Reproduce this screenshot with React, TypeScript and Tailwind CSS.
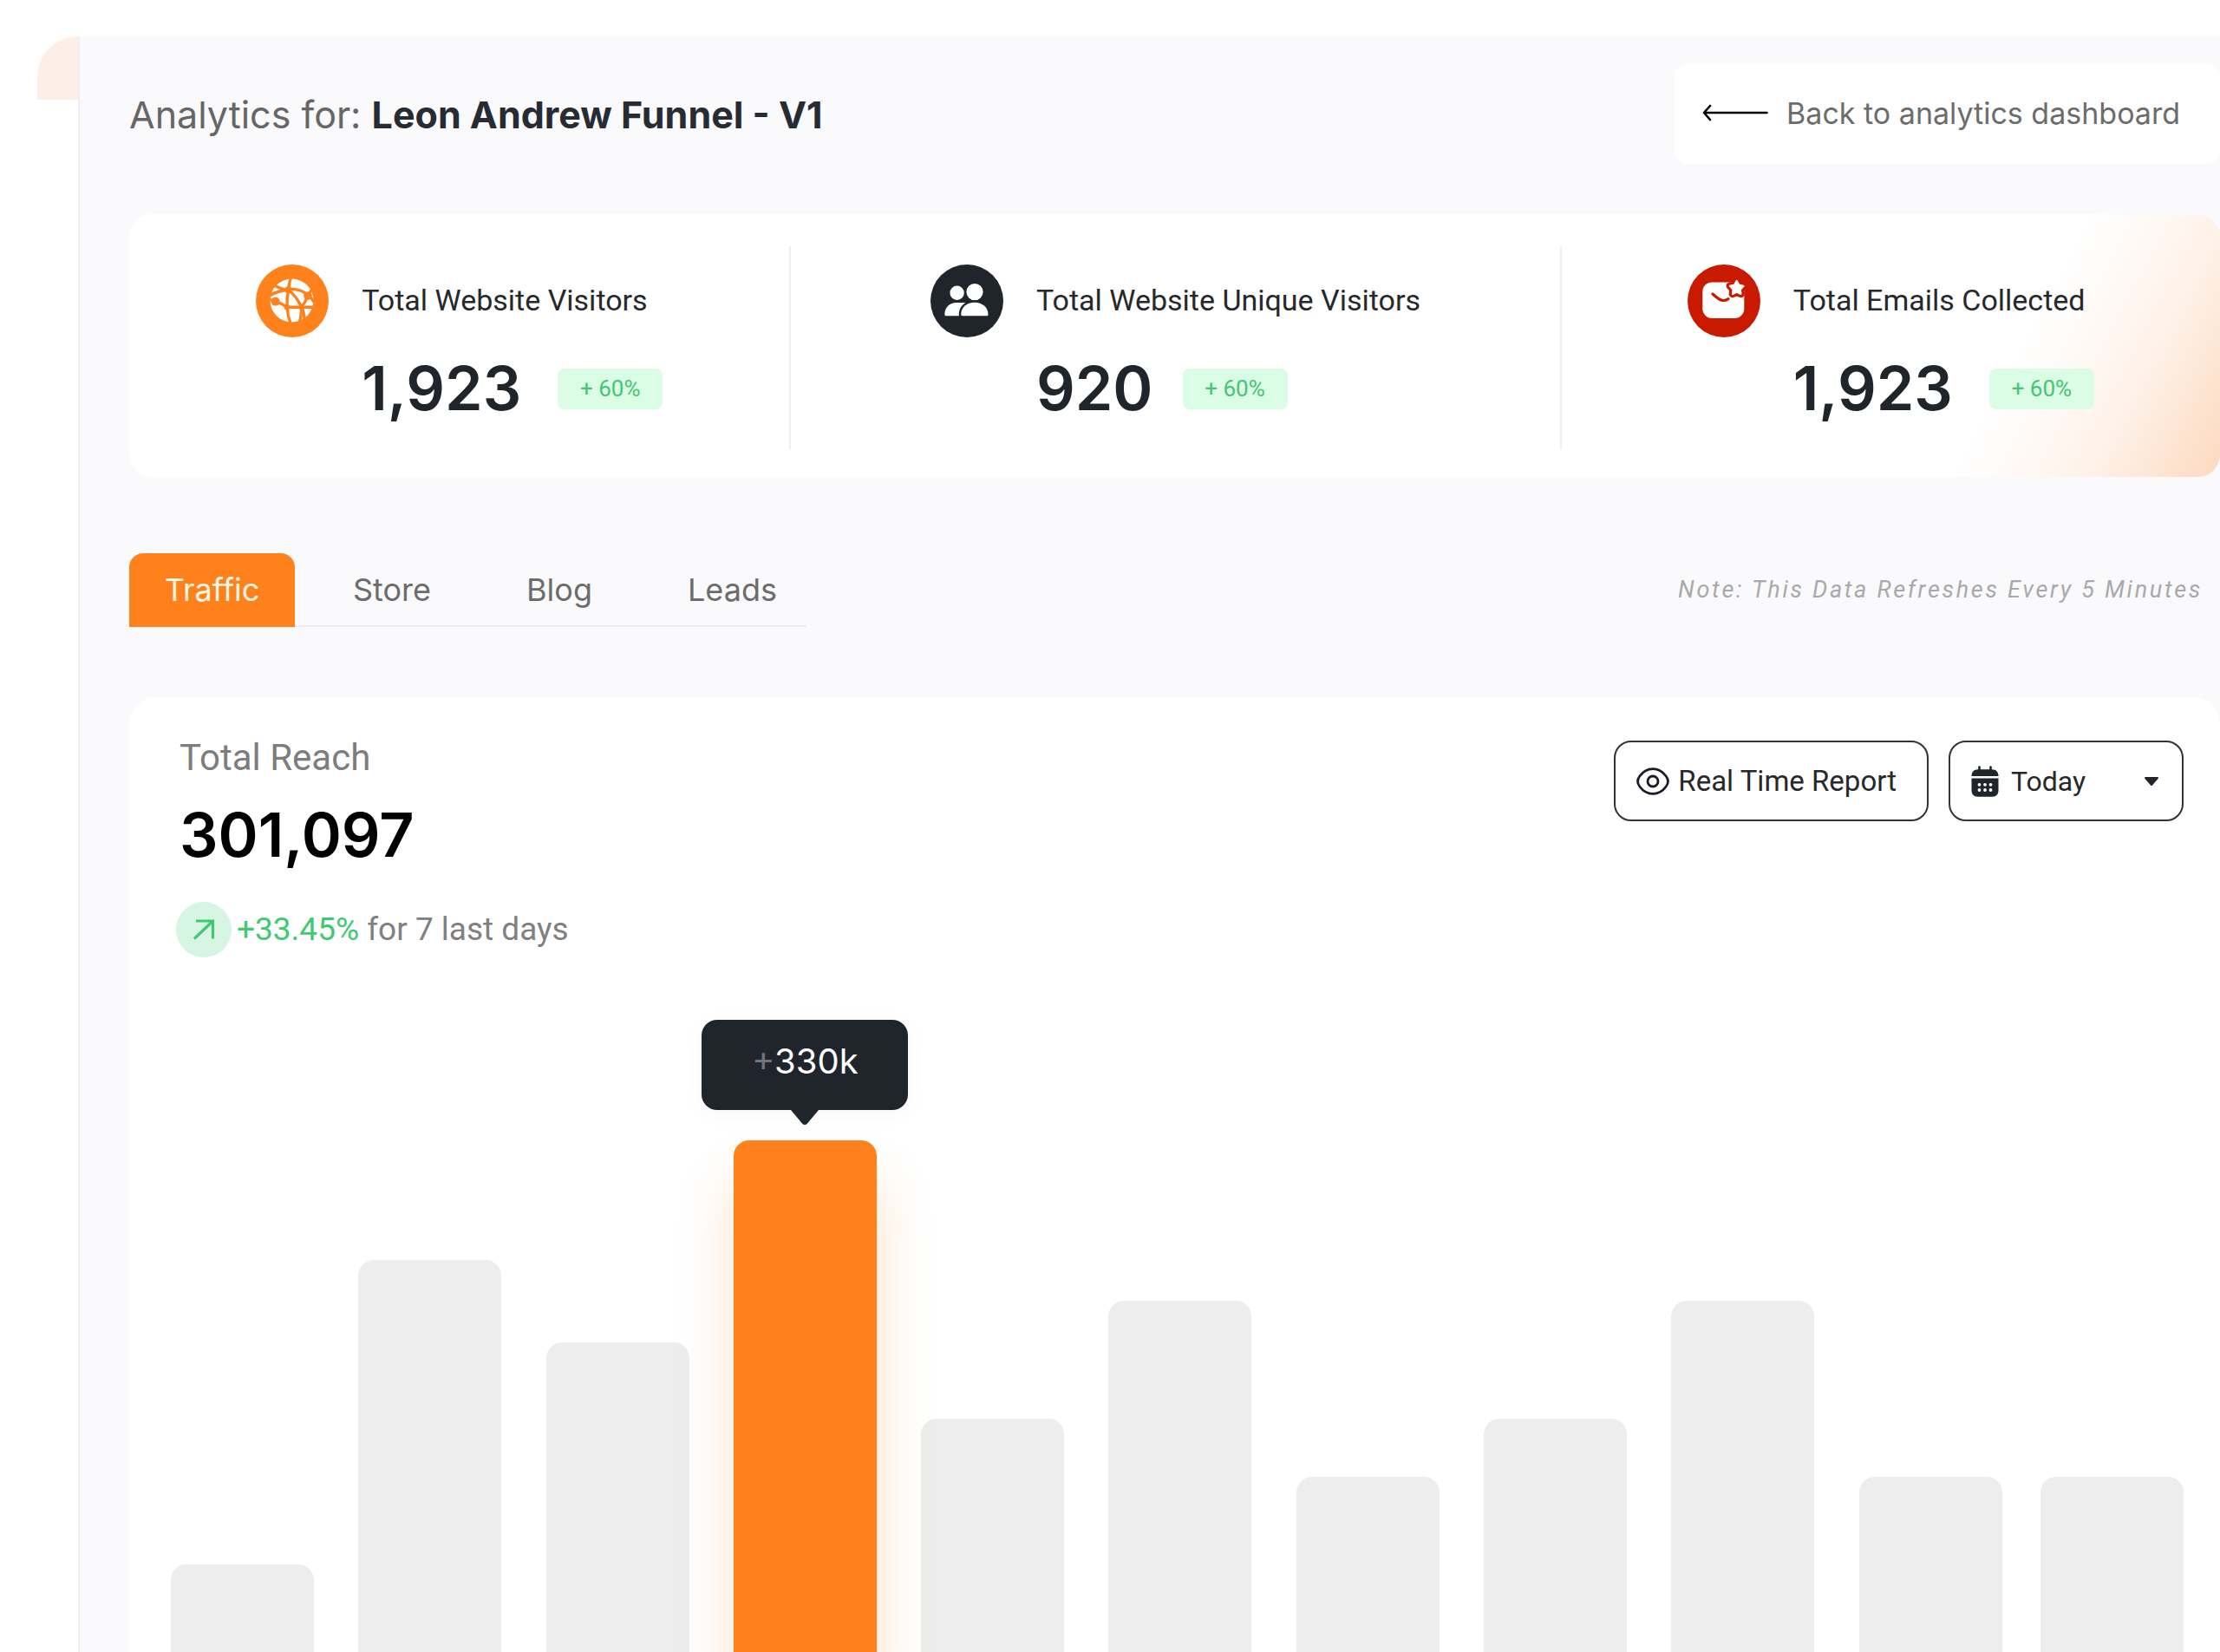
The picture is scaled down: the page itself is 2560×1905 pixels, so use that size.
import React from "react";

const stats = [
  { label: "Total Website Visitors", value: "1,923", change: "+ 60%", Icon: GlobeIcon, gap: "gap-[42px]" },
  { label: "Total Website Unique Visitors", value: "920", change: "+ 60%", Icon: UsersIcon, gap: "gap-[34px]" },
  { label: "Total Emails Collected", value: "1,923", change: "+ 60%", Icon: MailIcon, gap: "gap-[42px]" },
];

const tabs = ["Store", "Blog", "Leads"];

const bars = [101, 452, 357, 590, 269, 405, 202, 269, 405, 202, 202];
const activeBar = 3;

function GlobeIcon() {
  return (
    <svg viewBox="0 0 84 84" className="size-[84px]" aria-hidden="true">
      <circle cx="42" cy="42" r="42" fill="#fe811b" />
      <circle cx="41.5" cy="41.5" r="25" fill="#fff" />
      <g stroke="#fe811b" strokeWidth="3.4" fill="none" strokeLinecap="round">
        <path d="M37.7 29.3Q38 22 40.5 15" />
        <path d="M37.7 29.3Q30 29 20 23.5" />
        <path d="M37.7 29.3Q26 30 15.5 36" />
        <path d="M37.7 28.5Q52 27.5 61 36" />
        <path d="M37.7 29.3Q47 37 52.7 49.3" />
        <path d="M37.7 29.3Q35.5 39 36 49.3" />
        <path d="M22.7 42.7L15 40" />
        <path d="M22.7 42.7Q30 45 36 49.3H68" />
        <path d="M36 49.3Q37 60 40 68" />
        <path d="M52.7 49.3Q52.5 60 50 68" />
        <path d="M52.7 49.3Q56.5 57 56 66" />
        <path d="M52.7 49.3Q57 44 60 36L64.5 29" />
        <path d="M60 36Q65 39 67.5 44" />
      </g>
      <g fill="#fe811b">
        <circle cx="37.5" cy="29.3" r="4" />
        <circle cx="22.7" cy="42.7" r="5" />
        <circle cx="36" cy="49.3" r="3.2" />
        <circle cx="52.7" cy="49.3" r="3.4" />
        <circle cx="60" cy="36" r="4.8" />
      </g>
    </svg>
  );
}

function UsersIcon() {
  return (
    <svg viewBox="0 0 84 84" className="size-[84px]" aria-hidden="true">
      <circle cx="42" cy="42" r="42" fill="#1f252b" />
      <g fill="#fff">
        <circle cx="30.6" cy="32.8" r="8.2" />
        <path d="M16.3 57.5C16.3 49.5 22 44 30 44H42V59.3H18C17 59.3 16.3 58.6 16.3 57.5Z" />
        <g stroke="#1f252b" strokeWidth="5" paintOrder="stroke">
          <circle cx="51" cy="31.6" r="9.6" />
          <path d="M35.2 57.5C35.2 49.5 42 43.8 50.8 43.8S66.5 49.5 66.5 57.5C66.5 58.6 65.8 59.3 64.8 59.3H37C36 59.3 35.2 58.6 35.2 57.5Z" />
        </g>
      </g>
    </svg>
  );
}

function MailIcon() {
  const star = "M56.7 18.8L59.3 23.6L64.6 24.7L60.9 28.7L61.5 34L56.7 31.8L51.9 34L52.5 28.7L48.8 24.7L54.1 23.6Z";
  return (
    <svg viewBox="0 0 84 84" className="size-[84px]" aria-hidden="true">
      <circle cx="42" cy="42" r="42" fill="#c91a00" />
      <rect x="17.3" y="20.4" width="48" height="41.6" rx="11" fill="#fff" />
      <path d="M29 34Q36 40.5 40 41.4Q43.5 42 47 39.6" fill="none" stroke="#c91a00" strokeWidth="3.2" strokeLinecap="round" />
      <path d={star} fill="#c91a00" stroke="#c91a00" strokeWidth="8.5" strokeLinejoin="round" />
      <path d={star} fill="#fff" stroke="#fff" strokeWidth="2" strokeLinejoin="round" />
    </svg>
  );
}

function EyeIcon() {
  return (
    <svg viewBox="0 0 38 32" className="h-8 w-[38px]" fill="none" stroke="#1b1b2b" strokeWidth="2.8" aria-hidden="true">
      <path d="M19 1.6C12 1.600 8 4.300 3.800 10C0.800 14 0.800 18 3.800 22C8 27.700 12 30.400 19 30.400S30 27.700 34.200 22C37.200 18 37.200 14 34.200 10C30 4.300 26 1.600 19 1.600Z" />
      <circle cx="19" cy="16" r="6" />
    </svg>
  );
}

function CalendarIcon() {
  return (
    <svg viewBox="0 0 32 36" className="h-9 w-8" aria-hidden="true">
      <path d="M9.5 1.5V6M22.5 1.5V6" stroke="#1f252b" strokeWidth="2.6" strokeLinecap="round" />
      <path d="M0.5 12C0.5 7 3.5 4.3 8 4.3H24C28.5 4.3 31.5 7 31.5 12Z" fill="#1f252b" />
      <path d="M0.5 14.6H31.5V28.5C31.5 33 28.8 35.7 24.5 35.7H7.5C3.2 35.7 0.5 33 0.5 28.5Z" fill="#1f252b" />
      <g fill="#fff">
        {[9.5, 16, 22.5].map((x) => (
          <g key={x}>
            <circle cx={x} cy="21.8" r="1.9" />
            <circle cx={x} cy="28" r="1.9" />
          </g>
        ))}
      </g>
    </svg>
  );
}

export default function App() {
  return (
    <div className="flex min-h-screen overflow-hidden bg-white pt-[42px] pl-[43px] font-[Roboto,sans-serif]">
      <div className="h-[73px] w-[47px] shrink-0 rounded-tl-[60px] bg-[#feefe6]" />
      <main className="flex min-w-0 flex-1 flex-col border-l-2 border-[#eeeff1] bg-[#fafafc] pl-[57px]">
        <header className="flex items-center justify-between pt-8">
          <h1 className="font-[Inter,sans-serif] text-[43px] leading-[56px] text-[#666666]">
            Analytics for: <strong className="font-bold text-[#272b33]">Leon Andrew Funnel - V1</strong>
          </h1>
          <a
            href="#dashboard"
            className="flex h-[115px] items-center gap-[21px] rounded-[14px] bg-white pr-[46px] pb-[3px] pl-8 font-[Inter,sans-serif] text-[34px] text-[#6c6c6c]"
          >
            <svg viewBox="0 0 76 20" className="h-5 w-[76px]" fill="none" stroke="#000" strokeWidth="2.6" strokeLinecap="round" strokeLinejoin="round" aria-hidden="true">
              <path d="M74.5 10H2M9 2L2 10L9 18" />
            </svg>
            Back to analytics dashboard
          </a>
        </header>

        <section className="mt-[58px] grid grid-cols-[6fr_7fr_6fr] rounded-[26px] bg-[linear-gradient(118deg,#ffffff_88%,#fef2e9_94%,#fdd9be_100%)] pt-[37px] pb-[32px]">
          {stats.map(({ label, value, change, Icon, gap }, i) => (
            <div key={label} className={i ? "flex justify-center border-l-2 border-[#efeff1]" : "flex justify-center"}>
              <div className="flex gap-[38px] pt-[21px] pb-[28px]">
                <Icon />
                <div>
                  <h2 className="text-[34px] leading-[82px] text-[#27282b]">{label}</h2>
                  <div className={`flex items-center ${gap} mt-[19px]`}>
                    <span className="font-[Inter,sans-serif] text-[70px] leading-[84px] font-semibold text-[#1f252b]">{value}</span>
                    <span className="w-[121px] rounded-lg bg-[#dbfde5] text-center text-[26px] leading-[47px] text-[#43c673]">
                      {change}
                    </span>
                  </div>
                </div>
              </div>
            </div>
          ))}
        </section>

        <div className="mt-[88px] flex items-center justify-between pr-[20px]">
          <nav className="flex items-center border-b-2 border-[#ededf0] pr-[34px] font-[Inter,sans-serif] text-[36px] leading-[85px] text-[#6c6c6c]">
            <button type="button" className="-mb-[2px] w-[191px] rounded-t-2xl bg-[#fe811b] text-[#fff6e6]">
              Traffic
            </button>
            <div className="flex gap-[110px] pl-[67px]">
              {tabs.map((tab) => (
                <button type="button" key={tab} className="-mb-[2px]">
                  {tab}
                </button>
              ))}
            </div>
          </nav>
          <p className="text-[27px] tracking-widest text-[#a9a9ab] italic">Note: This Data Refreshes Every 5 Minutes</p>
        </div>

        <section className="mt-[81px] flex flex-1 flex-col rounded-t-[30px] bg-white pt-[46px] pr-[42px] pl-[48px]">
          <div className="flex items-start justify-between">
            <div className="pl-1.5">
              <h2 className="pl-1 text-[42px] leading-[48px] text-[#7d7d7d]">Total Reach</h2>
              <p className="mt-[25px] pl-1 font-[Inter,sans-serif] text-[70px] leading-[80px] font-semibold text-black">301,097</p>
              <div className="mt-[37px] flex items-center gap-[6px] text-[37px] leading-[64px] text-[#808080]">
                <span className="flex size-16 items-center justify-center rounded-full bg-[#d6f5e2]">
                  <svg viewBox="0 0 26 24" className="h-6 w-[26px]" fill="none" stroke="#41c972" strokeWidth="3.2" aria-hidden="true">
                    <path d="M2 22.5L23 2.5M4 2H23.5V22.5" />
                  </svg>
                </span>
                <p>
                  <span className="text-[#41c972]">+33.45%</span> for 7 last days
                </p>
              </div>
            </div>
            <div className="mt-1 flex gap-[23px] text-[#27282b]">
              <button type="button" className="flex h-[93px] items-center gap-2.5 rounded-[20px] border-2 border-[#333333] pr-[35px] pl-[24px] text-[33px]">
                <EyeIcon />
                Real Time Report
              </button>
              <div className="relative">
                <select
                  aria-label="Date range"
                  className="h-[93px] w-[271px] appearance-none rounded-[20px] border-2 border-[#333333] bg-white pl-[70px] text-[32px]"
                >
                  <option>Today</option>
                  <option>Last 7 days</option>
                </select>
                <span className="pointer-events-none absolute inset-y-0 left-[26px] flex items-center">
                  <CalendarIcon />
                </span>
                <span className="pointer-events-none absolute inset-y-0 right-[28px] flex items-center">
                  <svg viewBox="0 0 18 12" className="h-3 w-[18px]" fill="#1f252b" stroke="#1f252b" strokeWidth="2" strokeLinejoin="round" aria-hidden="true">
                    <path d="M2 2H16L9 10Z" />
                  </svg>
                </span>
              </div>
            </div>
          </div>

          <ul className="grid flex-1 grid-cols-[repeat(9,31fr)_30fr_165px] items-end pt-[200px]">
            {bars.map((height, i) =>
              i === activeBar ? (
                <li
                  key={i}
                  className="relative w-[165px] rounded-t-[18px] bg-[#fe811b] shadow-[0_50px_60px_6px_rgba(254,129,27,0.2)]"
                  style={{ height }}
                >
                  <div className="absolute bottom-full left-1/2 mb-[35px] flex h-[104px] w-[238px] -translate-x-1/2 flex-col items-center rounded-[18px] bg-[#1f252b] pt-[24px] font-[Inter,sans-serif] text-[40px] leading-[48px] text-white shadow-[0_4px_24px_rgba(31,37,43,0.04)]">
                    <span>
                      <span className="text-[#70757a]">+</span>330k
                    </span>
                    <svg viewBox="0 0 32 18" className="absolute top-full h-[18px] w-8" fill="#1f252b" aria-hidden="true">
                      <path d="M0 0H32L19 15.5C17 17.6 15 17.6 13 15.5Z" />
                    </svg>
                  </div>
                </li>
              ) : (
                <li key={i} className="relative w-[165px] rounded-t-[18px] bg-black/7" style={{ height }} />
              ),
            )}
          </ul>
        </section>
      </main>
    </div>
  );
}
